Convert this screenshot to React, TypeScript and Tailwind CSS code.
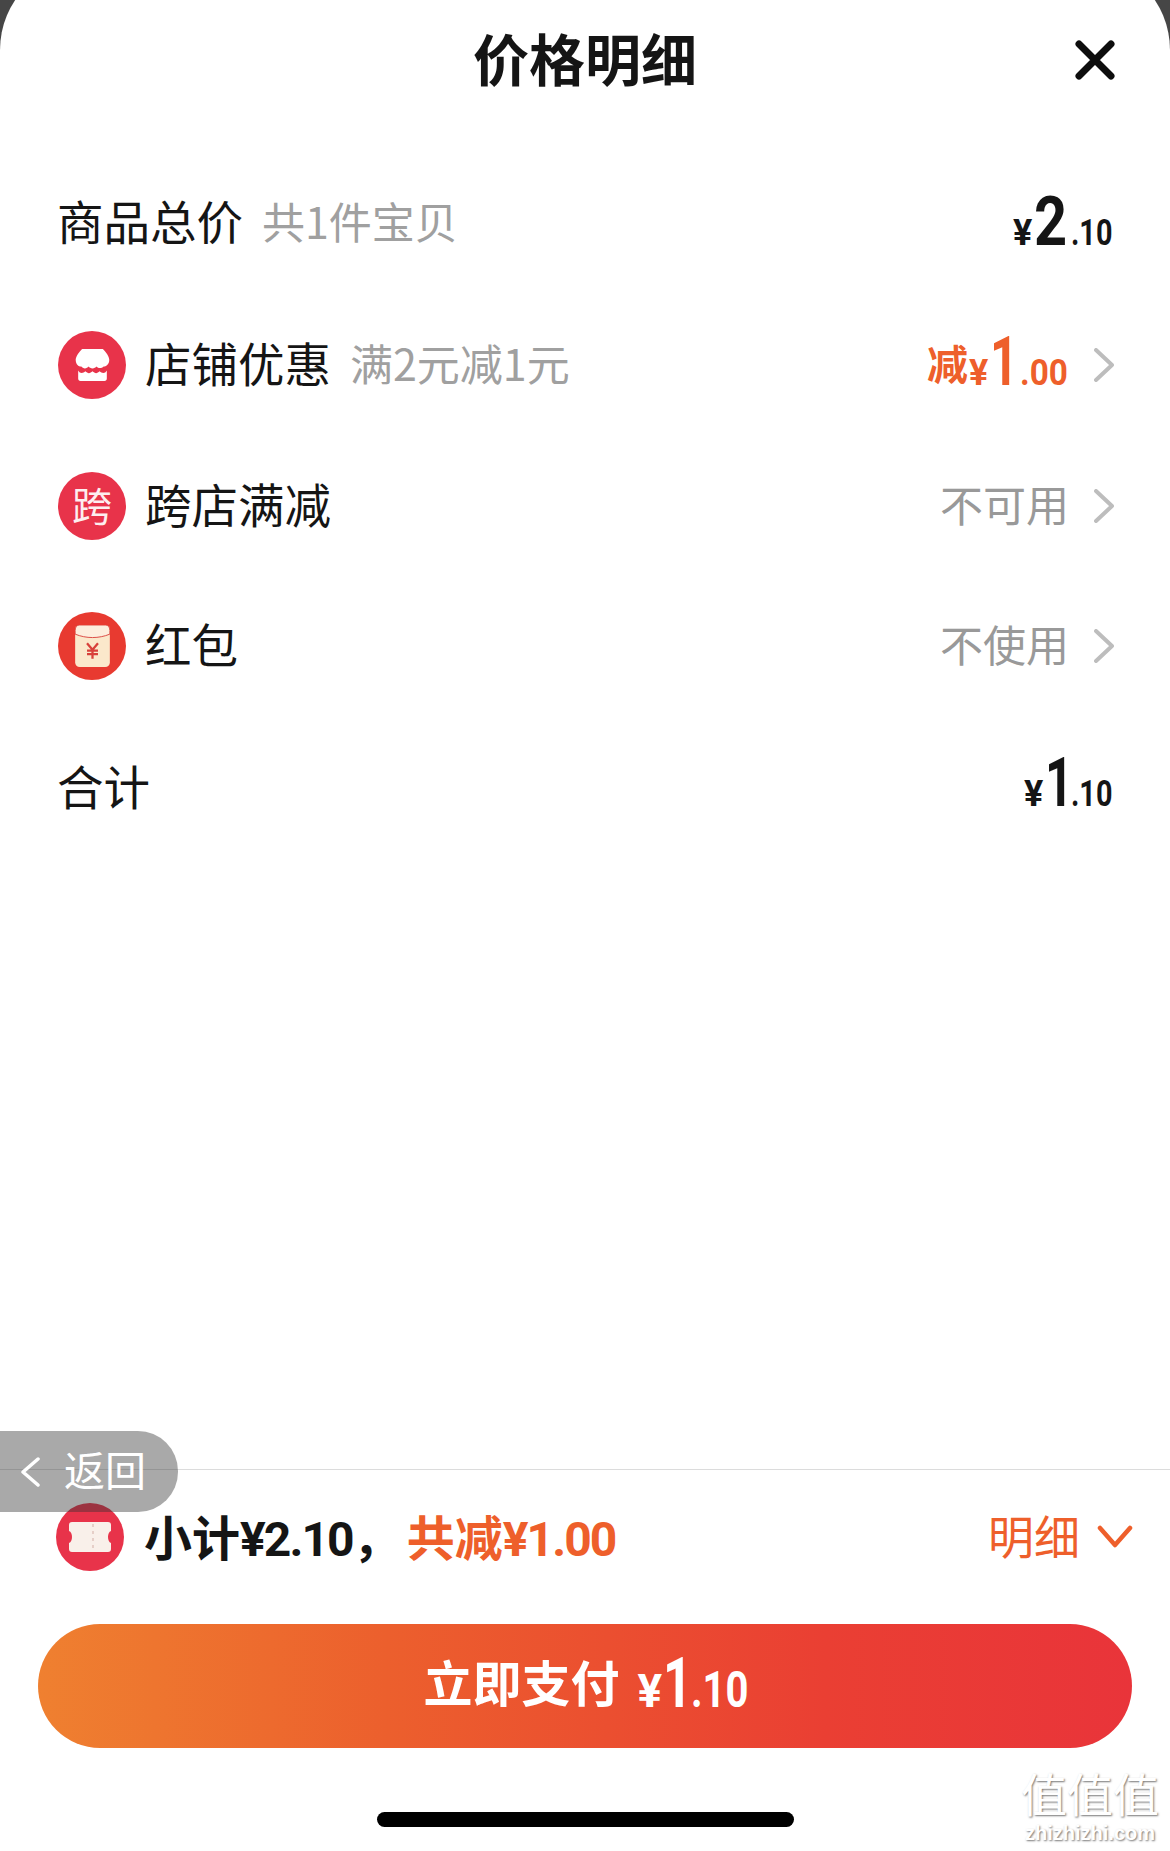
import React from "react";

const CJK = "font-['Noto_Sans_CJK_SC',sans-serif]";

function Chevron() {
  return (
    <svg width="20" height="34" viewBox="0 0 20 34" fill="none" className="shrink-0">
      <path d="M2 2 L18 17 L2 32" stroke="#bdbdbd" strokeWidth="4" strokeLinecap="round" strokeLinejoin="round" />
    </svg>
  );
}

function Circle({ color = "#e8334a", children }: { color?: string; children: React.ReactNode }) {
  return (
    <div className="w-[68px] h-[68px] rounded-full flex items-center justify-center shrink-0" style={{ background: color }}>
      {children}
    </div>
  );
}

function ShopIcon() {
  return (
    <svg width="35" height="34" viewBox="0 0 44 40" fill="none">
      <path d="M9 0 H35 C38 3 44 10 43 15 C42.5 19 39 22 36 22 C33 25 28 24 27 22 C25 25 19 25 17 22 C15 25 10 25 8 22 C4 22 1.5 19 1 15 C0 10 6 3 9 0 Z" fill="#fff" />
      <path d="M4 27 C6 31 10 31 13 28 C16 31 19 31 22 28 C25 31 28 31 31 28 C34 31 38 31 40 27 V37 C40 39 39 40 37 40 H7 C5 40 4 39 4 37 Z" fill="#fff" />
    </svg>
  );
}

function PacketIcon() {
  return (
    <svg width="35" height="42" viewBox="0 0 38 46" fill="none">
      <rect x="0" y="0" width="38" height="46" rx="5" fill="#fbe8cb" />
      <path d="M0 6 C0 2 2 0 5 0 H33 C36 0 38 2 38 6 V10 C26 15 12 15 0 10 Z" fill="#fdeedd" stroke="#d8403a" strokeWidth="1" />
      <path d="M13 20 L19 27 L25 20 M19 27 V37 M13 28 H25 M13 32 H25" stroke="#d8403a" strokeWidth="2.5" />
    </svg>
  );
}

function TicketIcon() {
  return (
    <svg width="42" height="30" viewBox="0 0 42 30" fill="none">
      <path d="M3 0 H39 C41 0 42 1 42 3 V9 C38 10 38 20 42 21 V27 C42 29 41 30 39 30 H3 C1 30 0 29 0 27 V21 C4 20 4 10 0 9 V3 C0 1 1 0 3 0 Z" fill="#f9f0ea" />
      <path d="M24 2 V28" stroke="#e6cfc8" strokeWidth="2" strokeDasharray="3 4" />
    </svg>
  );
}

/* A condensed digit run: the face is squeezed and its box is given the squeezed width. */
function N({ box, squeeze, children }: { box: string; squeeze: string; children: React.ReactNode }) {
  return (
    <span className={`inline-block whitespace-nowrap leading-none ${box}`}>
      <span className={`inline-block origin-left ${squeeze}`}>{children}</span>
    </span>
  );
}

function Digits({ className, children }: { className: string; children: React.ReactNode }) {
  return <span className={`inline-flex items-baseline leading-none font-['Roboto',sans-serif] font-bold whitespace-nowrap ${className}`}>{children}</span>;
}

function Row({ icon, label, sub, right, className = "" }: { icon?: React.ReactNode; label: string; sub?: string; right: React.ReactNode; className?: string }) {
  return (
    <div className={`h-[140px] flex items-center justify-between ${className}`}>
      <div className="flex items-center">
        {icon && <div className="mr-[19px]">{icon}</div>}
        <span className={`text-[46.5px] leading-none text-[#151515] pb-[6px] ${icon ? "" : "-ml-[1px]"}`}>{label}</span>
        {sub && <span className="text-[43px] leading-none text-[#a0a0a0] ml-[19px] pb-[6px]">{sub}</span>}
      </div>
      {right}
    </div>
  );
}

function Muted({ text }: { text: string }) {
  return (
    <div className="flex items-center gap-[25px]">
      <span className="text-[43px] leading-none text-[#999] pb-[6px]">{text}</span>
      <Chevron />
    </div>
  );
}

export default function App() {
  return (
    <div className={`w-[1170px] h-[1851px] overflow-hidden bg-[#464646] ${CJK}`}>
      <div className="h-[1891px] -mt-[40px] pt-[40px] bg-white rounded-t-[90px] flex flex-col">
        <div className="h-[120px] grid grid-cols-[1fr_auto_1fr] items-center pl-[55px] pr-[55px]">
          <div />
          <div className="text-[56px] leading-none font-bold text-[#151515] pb-[6px]">价格明细</div>
          <div className="flex justify-end">
            <svg width="40" height="40" viewBox="0 0 40 40" fill="none">
              <path d="M4 4 L36 36 M36 4 L4 36" stroke="#0d0d0d" strokeWidth="7" strokeLinecap="round" />
            </svg>
          </div>
        </div>

        <div className="pt-[33px] pl-[58px] pr-[56px]">
          <Row
            className="mb-[2px]"
            label="商品总价"
            sub="共1件宝贝"
            right={
              <Digits className="text-[#151515] pr-[3px] pb-[2px]">
                <N box="w-[21px] text-[36px]" squeeze="scale-x-100">¥</N>
                <N box="w-[37px] text-[68px]" squeeze="scale-x-[0.85]">2</N>
                <N box="w-[40px] text-[36px]" squeeze="scale-x-[0.8]">.10</N>
              </Digits>
            }
          />
          <Row
            className="mb-[1px]"
            icon={<Circle><ShopIcon /></Circle>}
            label="店铺优惠"
            sub="满2元减1元"
            right={
              <div className="flex items-center gap-[27px]">
                <Digits className="text-[#ee5f2b] pb-[6px]">
                  <span className={`text-[41px] ${CJK} font-bold mr-[1px] -translate-y-[5px]`}>减</span>
                  <N box="w-[21px] text-[36px]" squeeze="scale-x-100">¥</N>
                  <N box="w-[30px] text-[68px]" squeeze="scale-x-[0.72]">1</N>
                  <N box="w-[47px] text-[37px]" squeeze="scale-x-[0.9]">.00</N>
                </Digits>
                <Chevron />
              </div>
            }
          />
          <Row icon={<Circle><span className="text-[40px] leading-none text-[#fdeef0] pb-[4px]">跨</span></Circle>} label="跨店满减" right={<Muted text="不可用" />} />
          <Row className="mb-[2px]" icon={<Circle color="#e83a30"><PacketIcon /></Circle>} label="红包" right={<Muted text="不使用" />} />
          <Row
            label="合计"
            right={
              <Digits className="text-[#151515] pr-[3px] pb-[10px]">
                <N box="w-[21px] text-[36px]" squeeze="scale-x-100">¥</N>
                <N box="w-[26px] text-[68px]" squeeze="scale-x-[0.72]">1</N>
                <N box="w-[40px] text-[36px]" squeeze="scale-x-[0.8]">.10</N>
              </Digits>
            }
          />
        </div>

        <div className="mt-auto relative">
          <div className="h-px bg-[#dcdcdc]" />
          <div className="h-[134px] flex items-center justify-between pl-[56px] pr-[37px] mb-[20px]">
            <div className="flex items-center">
              <Circle><TicketIcon /></Circle>
              <span className="ml-[20px] text-[48px] leading-none font-bold text-[#151515] whitespace-nowrap">
                小计<span className="font-['Roboto',sans-serif] tracking-[-0.04em]">¥2.10</span>，
              </span>
              <span className="ml-[6px] text-[48px] leading-none font-bold text-[#ee5f2b] whitespace-nowrap">
                共减<span className="font-['Roboto',sans-serif] tracking-[-0.04em]">¥1.00</span>
              </span>
            </div>
            <div className="flex items-center gap-[17px]">
              <span className="text-[46px] leading-none text-[#ee5f2b] pb-[6px]">明细</span>
              <svg width="36" height="24" viewBox="0 0 36 24" fill="none">
                <path d="M3 3 L18 20 L33 3" stroke="#ee5f2b" strokeWidth="4.5" strokeLinecap="round" strokeLinejoin="round" />
              </svg>
            </div>
          </div>

          <div className="mx-[38px] h-[124px] rounded-full bg-[linear-gradient(90deg,#ef8030_0%,#ec5f2d_32%,#ea3f33_72%,#e9343a_100%)] flex items-center justify-center text-white">
            <span className="text-[49px] leading-none font-bold mr-[18px] pb-[11px]">立即支付</span>
            <Digits className="text-white pb-[6px]">
              <N box="w-[25px] text-[46px]" squeeze="scale-x-100">¥</N>
              <N box="w-[28px] text-[70px]" squeeze="scale-x-[0.72]">1</N>
              <N box="w-[56px] text-[50px]" squeeze="scale-x-[0.8]">.10</N>
            </Digits>
          </div>

          <div className="mt-[64px] mb-[24px] mx-auto w-[417px] h-[15px] rounded-full bg-black" />

          <div className="absolute left-0 -top-[38px] w-[178px] h-[81px] rounded-r-[40px] bg-[rgba(50,50,50,0.42)] flex items-center pl-[20px] gap-[24px] text-white">
            <svg width="20" height="30" viewBox="0 0 20 30" fill="none">
              <path d="M18 2 L3 15 L18 28" stroke="#fff" strokeWidth="3.5" strokeLinecap="round" strokeLinejoin="round" />
            </svg>
            <span className="text-[41px] leading-none pb-[6px]">返回</span>
          </div>

          <div className="absolute right-[10px] bottom-[8px] w-[140px] flex flex-col items-center pointer-events-none">
            <span className="text-[46px] leading-none text-white whitespace-nowrap [text-shadow:1px_1px_2px_#777]">值值值</span>
            <span className="text-[20px] leading-none mt-[8px] text-white font-['Liberation_Sans',sans-serif] font-bold whitespace-nowrap [text-shadow:1px_1px_2px_#777]">zhizhizhi.com</span>
          </div>
        </div>
      </div>
    </div>
  );
}
